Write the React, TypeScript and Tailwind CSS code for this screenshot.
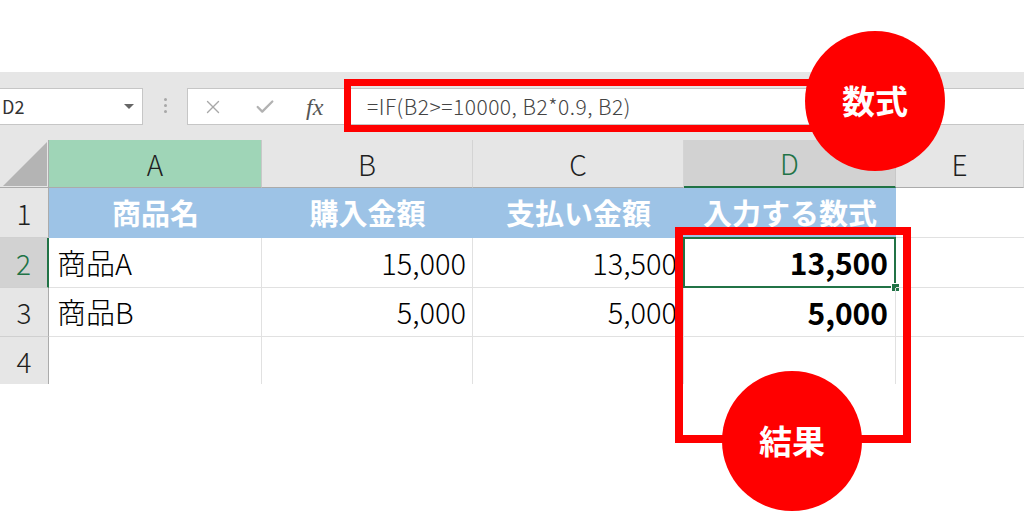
import { Check, X } from 'lucide-react';

const COLS = [
  { key: 'A', w: 'w-[213px]' },
  { key: 'B', w: 'w-[211px]' },
  { key: 'C', w: 'w-[211px]' },
  { key: 'D', w: 'w-[212px]' },
  { key: 'E', w: 'flex-1' },
];

const ROWS = [
  { n: 1, h: 'h-[50px]', cells: ['商品名', '購入金額', '支払い金額', '入力する数式', ''] },
  { n: 2, h: 'h-[50px]', cells: ['商品A', '15,000', '13,500', '13,500', ''] },
  { n: 3, h: 'h-[49px]', cells: ['商品B', '5,000', '5,000', '5,000', ''] },
  { n: 4, h: 'h-[47px]', cells: ['', '', '', '', ''] },
];

function Toolbar() {
  return (
    <div className="flex h-[68px] items-start bg-[#e6e6e6] pt-[16px]">
      <div className="flex h-[37px] w-[143px] items-center justify-between border border-l-0 border-[#c6c6c6] bg-white pl-[2px] pr-[8px] text-[18px] text-[#333]">
        <span>D2</span>
        <span className="h-0 w-0 border-x-[5px] border-t-[5px] border-x-transparent border-t-[#666]" />
      </div>
      <div className="flex w-[44px] flex-col items-center gap-[3px] pt-[10px]">
        <span className="h-[3px] w-[3px] rounded-full bg-[#a8a8a8]" />
        <span className="h-[3px] w-[3px] rounded-full bg-[#a8a8a8]" />
        <span className="h-[3px] w-[3px] rounded-full bg-[#a8a8a8]" />
      </div>
      <div className="flex h-[37px] w-[158px] items-center border border-[#c6c6c6] bg-white">
        <X className="ml-[14px] text-[#a8a8a8]" size={22} strokeWidth={1.5} />
        <Check className="ml-[30px] text-[#b2b2b2]" size={22} strokeWidth={2.5} />
        <span className="ml-[30px] font-['Liberation_Serif',serif] text-[24px] italic text-[#555]">fx</span>
      </div>
      <div className="flex h-[37px] flex-1 items-center border border-r-0 border-[#c6c6c6] bg-white pl-[21px] text-[21px] font-light tracking-[0.5px] text-[#444]">
        =IF(B2&gt;=10000, B2*0.9, B2)
      </div>
    </div>
  );
}

function Sheet() {
  return (
    <div className="flex flex-col">
      <div className="flex h-[48px] bg-[#e6e6e6]">
        <div className="flex h-[48px] w-[49px] items-end border-b border-r border-[#ababab] pb-[1px] pl-[3px]">
          <svg width="44" height="44" viewBox="0 0 44 44">
            <polygon points="44,0 44,44 0,44" fill="#b4b4b4" />
          </svg>
        </div>
        {COLS.map((c) => {
          const base = `${c.w} flex h-[48px] items-center justify-center text-[28px] font-light`;
          if (c.key === 'A')
            return (
              <div key={c.key} className={`${base} border-b border-r border-b-[#ababab] border-r-[#c8c8c8] bg-[#9fd5b7] text-[#1f1f1f]`}>
                {c.key}
              </div>
            );
          if (c.key === 'D')
            return (
              <div key={c.key} className={`${base} border-b-2 border-r border-b-[#217346] border-r-[#c8c8c8] bg-[#d2d2d2] text-[#217346]`}>
                {c.key}
              </div>
            );
          return (
            <div key={c.key} className={`${base} border-b border-r border-b-[#ababab] border-r-[#d4d4d4] text-[#1f1f1f]`}>
              {c.key}
            </div>
          );
        })}
      </div>
      {ROWS.map((r) => (
        <div key={r.n} className={`flex ${r.h}`}>
          <div
            className={`flex w-[49px] items-center justify-center text-[28px] font-light ${
              r.n === 2
                ? 'border-r-2 border-r-[#217346] bg-[#d2d2d2] text-[#217346]'
                : 'border-r border-r-[#ababab] bg-[#e6e6e6] text-[#1f1f1f]'
            } ${r.n === 4 ? '' : 'border-b border-b-[#d0d0d0]'}`}
          >
            {r.n}
          </div>
          {COLS.map((c, i) => {
            const text = r.cells[i];
            if (r.n === 1) {
              return (
                <div
                  key={c.key}
                  className={`${c.w} flex items-center justify-center text-[29px] font-bold ${
                    c.key === 'E' ? 'border-b border-[#e1e1e1] bg-white' : 'bg-[#9dc3e6] text-white'
                  }`}
                >
                  {text}
                </div>
              );
            }
            const isNum = i > 0;
            const isD = c.key === 'D';
            return (
              <div
                key={c.key}
                className={`${c.w} relative flex items-center text-black ${
                  isNum ? 'justify-end pr-[6px]' : 'pl-[8px]'
                } ${isD ? 'pr-[7px] text-[30px] font-bold' : 'text-[29px] font-light'} ${
                  c.key === 'E' ? '' : 'border-r border-r-[#e1e1e1]'
                } ${r.n === 4 ? '' : 'border-b border-b-[#e1e1e1]'}`}
              >
                {text}
                {isD && r.n === 2 && (
                  <>
                    <span className="absolute inset-[-1px] border-2 border-[#217346]" />
                    <span className="absolute bottom-[-5px] right-[-5px] h-[9px] w-[9px] border border-white bg-[#217346]" />
                  </>
                )}
              </div>
            );
          })}
        </div>
      ))}
    </div>
  );
}

export default function App() {
  return (
    <div className="relative h-[516px] w-[1024px] overflow-hidden bg-white font-['Noto_Sans_CJK_JP',sans-serif]">
      <div className="h-[72px]" />
      <Toolbar />
      <Sheet />

      {/* annotations */}
      <div className="absolute left-[344px] top-[79px] h-[53px] w-[486px] border-[7px] border-[#ff0000]" />
      <div className="absolute left-[805px] top-[31px] flex h-[140px] w-[140px] items-center justify-center rounded-full bg-[#ff0000] text-[33px] font-bold text-white">
        数式
      </div>
      <div className="absolute left-[675px] top-[227px] h-[216px] w-[236px] border-[8px] border-[#ff0000]" />
      <div className="absolute left-[722px] top-[371px] flex h-[140px] w-[140px] items-center justify-center rounded-full bg-[#ff0000] text-[33px] font-bold text-white">
        結果
      </div>
    </div>
  );
}
